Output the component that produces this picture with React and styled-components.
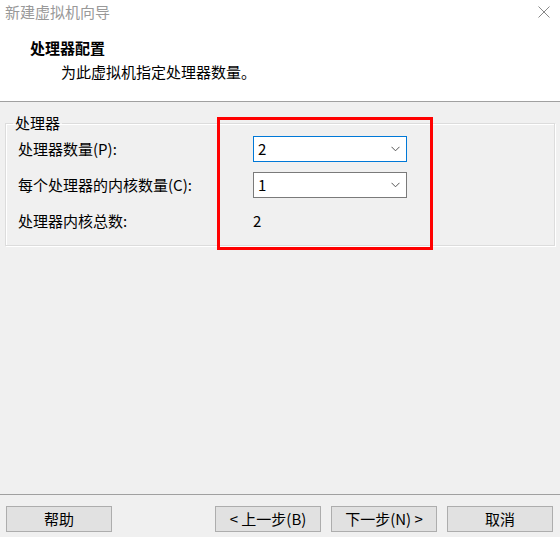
import React from "react";

// Libraries
import styled, { createGlobalStyle } from "styled-components";

const GlobalStyle = createGlobalStyle`
  html, body {
    margin: 0;
    padding: 0;
    background: #f0f0f0;
  }

  body {
    font-family: "Noto Sans CJK SC", "Liberation Sans", sans-serif;
    font-size: 15px;
    color: #000;
  }
`;

const Window = styled.div`
  width: 560px;
  height: 537px;
  display: flex;
  flex-direction: column;
  background: #f0f0f0;
  overflow: hidden;
`;

const TitleBar = styled.div`
  height: 24px;
  display: flex;
  align-items: center;
  justify-content: space-between;
  padding: 0 10px 0 5px;
  background: #fff;
  color: #999;
  line-height: 24px;
`;

const CloseIcon = styled.svg`
  width: 12px;
  height: 12px;
  display: block;
`;

const Header = styled.div`
  background: #fff;
  padding: 14px 0 19px 30px;
  border-bottom: 1px solid #a0a0a0;
`;

const HeaderTitle = styled.div`
  font-weight: 700;
  line-height: 20px;
`;

const HeaderText = styled.div`
  margin-top: 4px;
  padding-left: 31px;
  line-height: 20px;
`;

const Body = styled.div`
  flex: 1;
  position: relative;
  padding: 11px 5px 0;
`;

const Group = styled.fieldset`
  margin: 0;
  padding: 3px 12px 11px 12px;
  border: 1px solid #dcdcdc;
  box-shadow: inset 1px 1px 0 #fff, 1px 1px 0 #fff;
  min-width: 0;
`;

const Legend = styled.legend`
  margin-left: -5px;
  padding: 0 2px;
  line-height: 20px;
`;

const Rows = styled.div`
  display: grid;
  grid-template-columns: 235px 154px;
  grid-auto-rows: 26px;
  row-gap: 10px;
  align-items: center;
`;

const Label = styled.div`
  line-height: 20px;
`;

const Combo = styled.div`
  height: 26px;
  box-sizing: border-box;
  display: flex;
  align-items: center;
  justify-content: space-between;
  padding: 0 6px 0 4px;
  background: #fff;
  border: 1px solid ${(p) => (p.$focused ? "#0078d7" : "#7a7a7a")};
  line-height: 20px;
`;

const Chevron = styled.svg`
  width: 9px;
  height: 6px;
  display: block;
`;

const Value = styled.div`
  line-height: 20px;
`;

const Highlight = styled.div`
  position: absolute;
  top: 15px;
  left: 217px;
  width: 216px;
  height: 133px;
  box-sizing: border-box;
  border: 3px solid #ff0000;
  pointer-events: none;
`;

const Footer = styled.div`
  border-top: 1px solid #a0a0a0;
  padding: 11px 7px 5px 6px;
  display: flex;
  align-items: center;
  gap: 10px;
`;

const Spacer = styled.div`
  flex: 1;
`;

const Button = styled.button`
  width: 106px;
  height: 26px;
  box-sizing: border-box;
  padding: 0;
  background: #e1e1e1;
  border: 1px solid #adadad;
  font-family: inherit;
  font-size: 15px;
  line-height: 20px;
  color: #000;
`;

const ComboBox = ({ value, focused }) => (
  <Combo $focused={focused}>
    <span>{value}</span>
    <Chevron viewBox="0 0 9 6">
      <path d="M0.5 0.8 L4.5 4.8 L8.5 0.8" fill="none" stroke="#555" strokeWidth="1" />
    </Chevron>
  </Combo>
);

const App = () => {
  return (
    <Window>
      <GlobalStyle />

      <TitleBar>
        <span>新建虚拟机向导</span>
        <CloseIcon viewBox="0 0 12 12">
          <path d="M0.5 0.5 L11.5 11.5 M11.5 0.5 L0.5 11.5" stroke="#888" strokeWidth="1" />
        </CloseIcon>
      </TitleBar>

      <Header>
        <HeaderTitle>处理器配置</HeaderTitle>
        <HeaderText>为此虚拟机指定处理器数量。</HeaderText>
      </Header>

      <Body>
        <Group>
          <Legend>处理器</Legend>
          <Rows>
            <Label>处理器数量(P):</Label>
            <ComboBox value="2" focused />

            <Label>每个处理器的内核数量(C):</Label>
            <ComboBox value="1" />

            <Label>处理器内核总数:</Label>
            <Value>2</Value>
          </Rows>
        </Group>

        <Highlight />
      </Body>

      <Footer>
        <Button>帮助</Button>
        <Spacer />
        <Button>&lt; 上一步(B)</Button>
        <Button>下一步(N) &gt;</Button>
        <Button>取消</Button>
      </Footer>
    </Window>
  );
};

export default App;
